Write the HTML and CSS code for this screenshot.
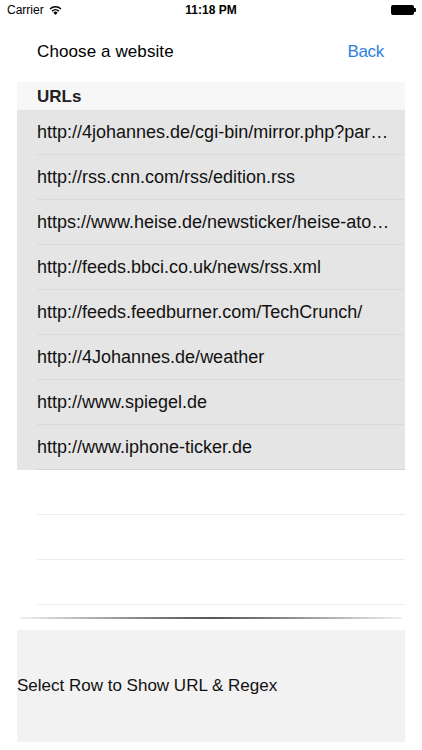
FILE: index.html
```html
<!DOCTYPE html>
<html>
<head>
    <title>Choose a website</title>
    <meta name="viewport" content="width=device-width, initial-scale=1.0">
    <link rel="stylesheet" href="styles.css">
</head>
<body>
    <div class="status-bar">
        <div class="carrier">Carrier
            <svg class="wifi" width="13" height="10" viewBox="0 0 13 10">
                <path d="M6.5 10 L4.3 7.4 A3.3 3.3 0 0 1 8.7 7.4 Z" fill="#000"/>
                <path d="M2.6 5.6 A5.6 5.6 0 0 1 10.4 5.6 L9.4 6.7 A4.2 4.2 0 0 0 3.6 6.7 Z" fill="#000"/>
                <path d="M0.5 3.4 A8.7 8.7 0 0 1 12.5 3.4 L11.5 4.5 A7.2 7.2 0 0 0 1.5 4.5 Z" fill="#000"/>
            </svg>
        </div>
        <div class="time">11:18 PM</div>
        <div class="battery"><span class="battery-body"></span><span class="battery-tip"></span></div>
    </div>

    <div class="nav-bar">
        <span class="nav-title">Choose a website</span>
        <a class="nav-back" href="#">Back</a>
    </div>

    <div class="table">
        <div class="table-header">URLs</div>
        <div class="row filled">http://4johannes.de/cgi-bin/mirror.php?par…</div>
        <div class="row filled">http://rss.cnn.com/rss/edition.rss</div>
        <div class="row filled">https://www.heise.de/newsticker/heise-ato…</div>
        <div class="row filled">http://feeds.bbci.co.uk/news/rss.xml</div>
        <div class="row filled">http://feeds.feedburner.com/TechCrunch/</div>
        <div class="row filled">http://4Johannes.de/weather</div>
        <div class="row filled">http://www.spiegel.de</div>
        <div class="row filled last">http://www.iphone-ticker.de</div>
        <div class="row empty"></div>
        <div class="row empty"></div>
        <div class="row empty"></div>
    </div>

    <div class="shadow-line"></div>

    <div class="detail-box">Select Row to Show URL &amp; Regex</div>
</body>
</html>
```

FILE: styles.css
```css
body {margin: 0; background: #fff; color: #000; font-family: "Liberation Sans", Arial, sans-serif; width: 422px; height: 750px; overflow: hidden;}
.status-bar {height: 20px; display: flex; align-items: center; justify-content: space-between; padding: 0 6px 2px 7px; font-size: 12px; position: relative;}
.carrier {display: flex; align-items: center; gap: 5px;}
.wifi {margin-top: -1px;}
.time {position: absolute; left: 0; right: 0; text-align: center; font-weight: bold; font-size: 12px;}
.battery {display: flex; align-items: center;}
.battery-body {display: block; width: 23px; height: 10px; background: #000; border-radius: 2px;}
.battery-tip {display: block; width: 2px; height: 4px; background: #000; border-radius: 0 1px 1px 0;}
.nav-bar {height: 60px; display: flex; align-items: center; justify-content: space-between; padding: 0 38px 0 37px; font-size: 17px;}
.nav-title {letter-spacing: 0.1px;}
.nav-back {color: #2f7fe0; text-decoration: none; letter-spacing: -0.3px;}
.table {margin: 0 17px;}
.table-header {height: 28px; background: #f7f7f7; padding-left: 20px; font-size: 17px; font-weight: bold; line-height: 30px; color: #222;}
.row {height: 45px; line-height: 45px; font-size: 18px; padding: 0 10px 0 20px; white-space: nowrap; overflow: hidden; position: relative; color: #111;}
.row::after {content: ""; position: absolute; left: 20px; right: 0; bottom: 0; height: 1px; background: #dadada;}
.filled {background: #e5e5e5;}
.empty {background: #fff;}
.empty::after {background: #ececec;}
.last::after {background: #d6d6d6;}
.shadow-line {height: 2px; margin: 12px 20px 0; background: linear-gradient(to right, #f0f0f0, #8a8a8a 30%, #555 50%, #8a8a8a 70%, #f0f0f0); border-radius: 1px;}
.detail-box {margin: 11px 17px 0; height: 112px; background: #f2f2f2; display: flex; align-items: center; font-size: 17px; color: #111;}
```
